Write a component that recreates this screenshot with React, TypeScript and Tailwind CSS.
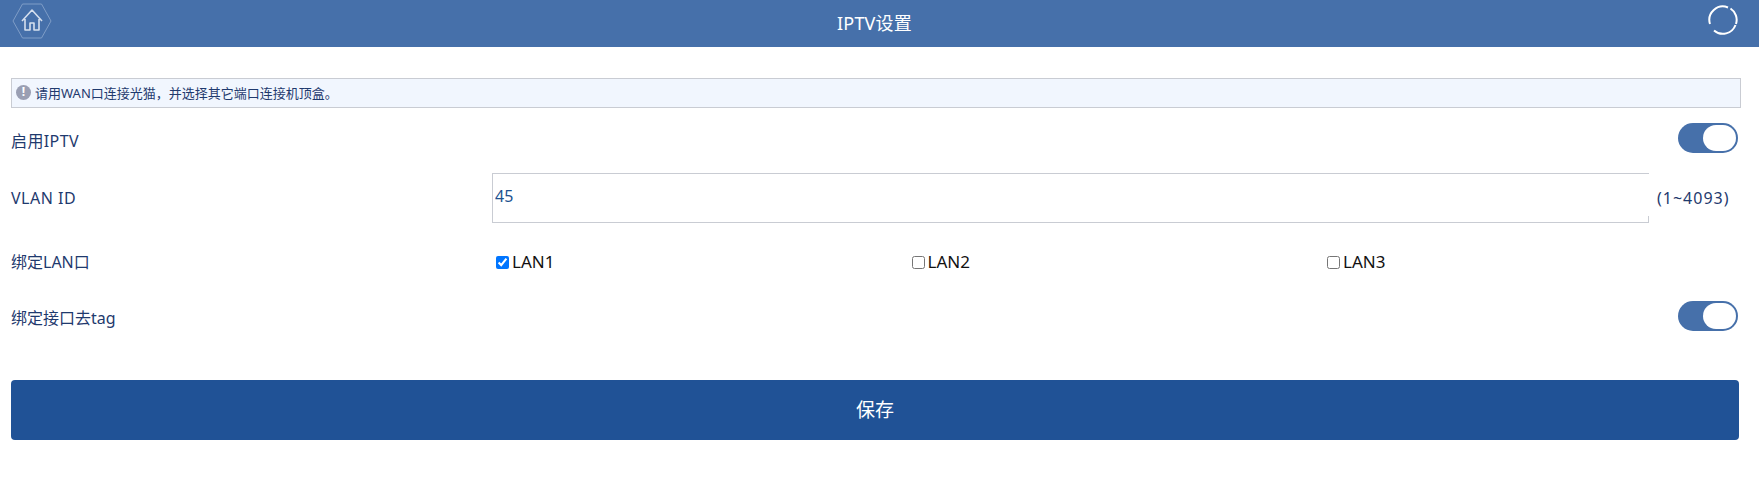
import React from "react";

const font = "font-['Noto_Sans','Noto_Sans_CJK_SC',sans-serif]";

const Toggle: React.FC = () => (
  <div className="flex h-[30px] w-[60px] items-center justify-end rounded-full bg-[#4670aa] pr-[2px]">
    <div className="h-[26px] w-[33px] rounded-full bg-white" />
  </div>
);

const Lan: React.FC<{ name: string; checked?: boolean }> = ({ name, checked }) => (
  <label className="flex w-[415.5px] items-center gap-[3px] text-[17px] text-[#111]">
    <input type="checkbox" defaultChecked={checked} className="ml-[4px] h-[13px] w-[13px] accent-[#0075ff]" />
    {name}
  </label>
);

export default function App() {
  return (
    <div className={`${font} min-h-[497px] bg-white`}>
      <header className="flex h-[47px] items-center justify-between bg-[#4670aa] pl-[12px] pr-[21px] text-white">
        <svg width="40" height="36" viewBox="0 0 40 36" fill="none" className="mb-[6px]">
          <path d="M1 18 10.5 1h19L39 18l-9.5 17h-19Z" stroke="#7f9dc7" strokeWidth="1" />
          <path d="M10 18 20 7l10 11M13 16v11h5v-7h4v7h5V16" stroke="#d5dfee" strokeWidth="1.6" strokeLinejoin="round" />
        </svg>
        <h1 className="mr-[11px] mb-[2px] text-lg tracking-[0.2px]">IPTV设置</h1>
        <svg width="30" height="30" viewBox="0 0 30 30" fill="none" stroke="white" strokeWidth="2" className="mb-[7px]">
          <path d="M2 19A13.5 13.5 0 0 1 20 2.5" />
          <path d="M22.5 3.5A13.5 13.5 0 0 1 28 19" />
          <path d="M27.5 20A13.5 13.5 0 0 1 6 25.5" />
        </svg>
      </header>

      <main className="px-[11px] pt-[31px]">
        <div className="mr-[7px] flex h-[30px] items-center gap-[4px] border border-[#c9ccd3] bg-[#f1f6fe] pl-[4px] text-[13px] text-[#1f3a6e]">
          <span className="mb-[2px] flex h-[15px] w-[15px] items-center justify-center rounded-full bg-[#9a9fb3] text-[12px] font-bold text-white">!</span>
          <span className="pt-[2px]">请用WAN口连接光猫，并选择其它端口连接机顶盒。</span>
        </div>

        <div className="mt-[15px] mr-[10px] flex h-[30px] items-center justify-between text-base text-[#1f3a6e]">
          <span className="pt-[5px] tracking-[0.4px]">启用IPTV</span>
          <Toggle />
        </div>

        <div className="mt-[20px] flex h-[50px] items-center text-base text-[#1f3a6e]">
          <span className="w-[481px] tracking-[0.5px]">VLAN ID</span>
          <div className="relative h-full w-[1157px]">
            <input
              defaultValue="45"
              className="h-full w-full border border-r-0 border-[#c9ccd3] px-[2px] pb-[5px] text-[#20528f] outline-none"
            />
            <span className="absolute right-0 bottom-0 h-[7px] w-px bg-[#c9ccd3]" />
          </div>
          <span className="ml-[8px] whitespace-nowrap tracking-[1px]">(1~4093)</span>
        </div>

        <div className="mt-[27px] flex h-[24px] items-center text-base text-[#1f3a6e]">
          <span className="w-[481px]">绑定LAN口</span>
          <Lan name="LAN1" checked />
          <Lan name="LAN2" />
          <Lan name="LAN3" />
        </div>

        <div className="mt-[27px] mr-[10px] flex h-[30px] items-center justify-between text-base text-[#1f3a6e]">
          <span className="pt-[3px]">绑定接口去tag</span>
          <Toggle />
        </div>

        <button className="mt-[49px] h-[60px] w-[1728px] rounded-[4px] bg-[#205296] pt-[1px] text-[19px] text-white">保存</button>
      </main>
    </div>
  );
}
